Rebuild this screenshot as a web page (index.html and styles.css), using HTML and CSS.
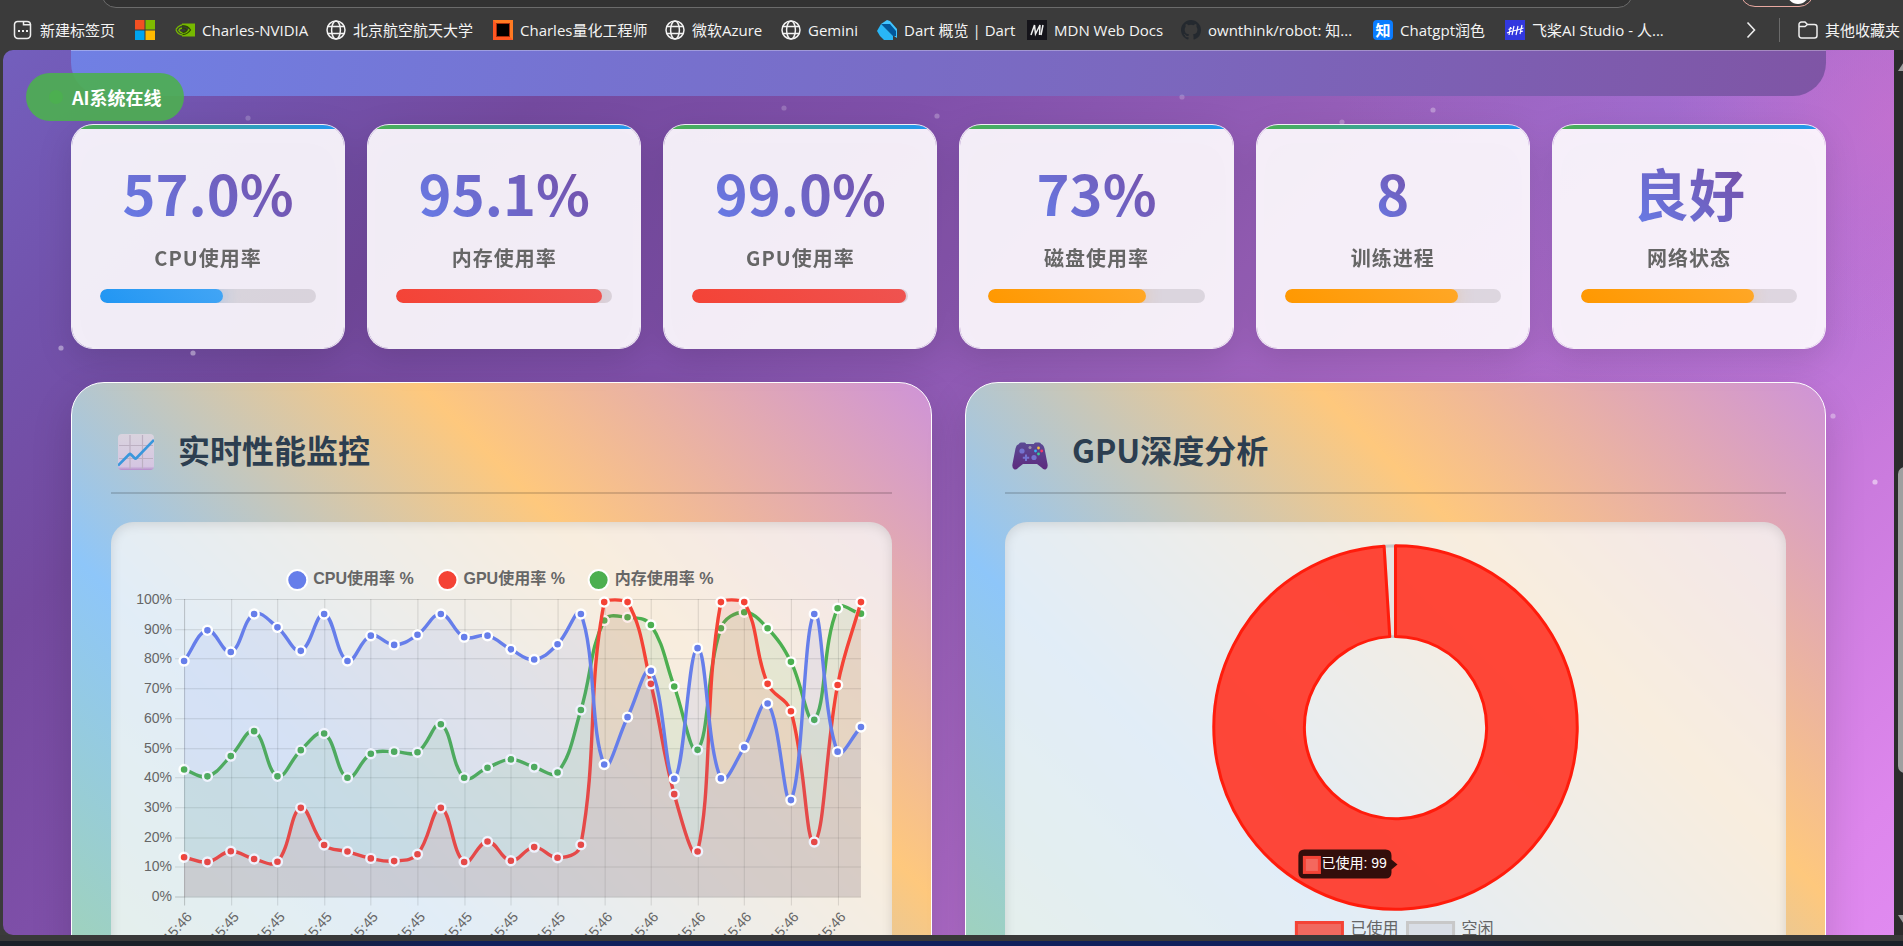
FILE: index.html
```html
<!DOCTYPE html>
<html lang="zh-CN">
<head>
<meta charset="utf-8">
<title>AI系统监控</title>
<link rel="stylesheet" href="styles.css">
</head>
<body>
<svg class="defs" width="0" height="0" aria-hidden="true">
  <symbol id="globe" viewBox="0 0 20 20"><g fill="none" stroke="#f2f2f2" stroke-width="1.5"><circle cx="10" cy="10" r="9"/><ellipse cx="10" cy="10" rx="4.4" ry="9"/><path d="M2 6.6h16M2 13.4h16"/></g></symbol>
</svg>

<header class="browser">
  <div class="toolbar">
    <div class="address"></div>
    <div class="profile"><span class="avatar"></span></div>
  </div>
  <nav class="bookmarks">
    <div class="marks">
      <a class="mark" href="#"><svg viewBox="0 0 20 20"><g fill="none" stroke="#eee" stroke-width="1.5"><path d="M4.500 1.500h6v3.200h7V15a3.500 3.500 0 0 1-3.500 3.500H5A3.500 3.500 0 0 1 1.500 15V4.500a3 3 0 0 1 3-3zM10.500 1.500H14a3.500 3.500 0 0 1 3.500 3.400"/></g><path d="M5 10h2v2H5zM9 10h2v2H9zM13 10h2v2h-2z" fill="#eee"/></svg>新建标签页</a>
      <a class="mark" href="#" aria-label="Microsoft"><svg viewBox="0 0 20 20"><path fill="#f25022" d="M0 0h9.500v9.500H0z"/><path fill="#7fba00" d="M10.500 0H20v9.500h-9.500z"/><path fill="#00a4ef" d="M0 10.500h9.500V20H0z"/><path fill="#ffb900" d="M10.500 10.500H20V20h-9.500z"/></svg></a>
      <a class="mark" href="#"><svg viewBox="0 0 20 20"><path fill="#76b900" d="M7 3.500h13v13H7z"/><path d="M0 10c3-5 9-6.500 14-2-2 5-9 7-14 2z" fill="#3b3b3b"/><g fill="none" stroke-width="1.300"><path stroke="#76b900" d="M.800 9.600C4 4.400 8 5 7.500 5M1 10c1.500 3.500 4 5 7 5M7 8c-2 .4-3 1.600-3.200 2.400C5 12.500 7 13 8 12.800"/><path stroke="#2d4a00" d="M7 6c4-.5 7 1.500 8.500 4-2 3-5 4.500-8 4.500M7 8.300c2.500-.4 4 .7 4.800 2-1 1.600-2.500 2.300-4.300 2"/></g></svg>Charles-NVIDIA</a>
      <a class="mark" href="#"><svg><use href="#globe"/></svg>北京航空航天大学</a>
      <a class="mark" href="#"><svg viewBox="0 0 20 20"><path fill="#ff5722" d="M0 0h20v20H0z"/><path fill="#ff7a22" d="M0 0h20v20L17 17V3H3z"/><path fill="#a62d0c" d="M3 3h14v14H3z"/><path fill="#000" d="M4 4h12v12H4z"/></svg>Charles量化工程师</a>
      <a class="mark" href="#"><svg><use href="#globe"/></svg>微软Azure</a>
      <a class="mark" href="#"><svg><use href="#globe"/></svg>Gemini</a>
      <a class="mark" href="#"><svg viewBox="0 0 20 20"><path fill="#40c4ff" d="M4 4l6-4 3 1 7 8v9l-3-2z"/><path fill="#01579b" d="M4 4h9l6 7v5h-3z"/><path fill="#29b6f6" d="M4 4L0 11l3 5 4 4h9v-4z"/></svg>Dart 概览 | Dart</a>
      <a class="mark" href="#"><svg viewBox="0 0 20 20"><path fill="#15141a" d="M0 0h20v20H0z"/><path d="M4 15L7.500 5l1 9L13 5l-.5 10M14 15l2-10" fill="none" stroke="#eee" stroke-width="1.500"/></svg>MDN Web Docs</a>
      <a class="mark" href="#"><svg viewBox="0 0 16 16"><path fill="#24292f" d="M8 0C3.580 0 0 3.580 0 8c0 3.540 2.290 6.530 5.470 7.590.4.070.55-.17.55-.38v-1.490c-2.010.37-2.530-.49-2.690-.94-.09-.23-.48-.94-.82-1.130-.28-.15-.68-.52-.01-.53.63-.01 1.080.58 1.230.82.72 1.210 1.870.87 2.330.66.070-.52.280-.87.510-1.070-1.780-.2-3.640-.89-3.640-3.950 0-.87.310-1.590.82-2.150-.08-.2-.36-1.020.08-2.120 0 0 .67-.21 2.200.82a7.400 7.400 0 0 1 4 0c1.530-1.040 2.200-.82 2.200-.82.44 1.100.16 1.920.08 2.120.51.56.82 1.270.82 2.150 0 3.070-1.870 3.750-3.650 3.950.29.250.54.730.54 1.480v2.200c0 .21.150.46.550.38A8.010 8.010 0 0 0 16 8c0-4.420-3.580-8-8-8z"/></svg>ownthink/robot: 知...</a>
      <a class="mark" href="#"><span class="zhihu">知</span>Chatgpt润色</a>
      <a class="mark" href="#"><svg viewBox="0 0 20 20"><path fill="#3238df" d="M0 0h20v20H0z"/><path d="M2 13l5-2M3.500 9.500L7 8M5.500 7L4 15M9 6l-2 9M8 11l4-1M13 6l-2 9M12.500 10l6-2M17 5l-2 9M15 12l3-1" fill="none" stroke="#fff" stroke-width="1.200"/></svg>飞桨AI Studio - 人...</a>
    </div>
    <button class="more" aria-label="更多"><svg viewBox="0 0 10 18"><path d="M1.500 1.500L8.500 9l-7 7.500" fill="none" stroke="#eee" stroke-width="1.600"/></svg></button>
    <a class="mark others" href="#"><svg viewBox="0 0 20 20"><path d="M1 4.500A2.500 2.500 0 0 1 3.500 2H7l2.500 2.500h7A2.500 2.500 0 0 1 19 7v8.500a2.500 2.500 0 0 1-2.500 2.500h-13A2.500 2.500 0 0 1 1 15.500zM1 6.500h6l2.500-2" fill="none" stroke="#eee" stroke-width="1.500"/></svg>其他收藏夹</a>
  </nav>
</header>

<div class="window">
  <main class="page">
    <div class="status"><span class="dot"></span>AI系统在线</div>
    <div class="hero"></div>
    <section class="stats">
      <article class="stat"><div class="value">57.0%</div><div class="label">CPU使用率</div><div class="track"><div class="fill blue" style="width:57%"></div></div></article>
      <article class="stat"><div class="value">95.1%</div><div class="label">内存使用率</div><div class="track"><div class="fill red" style="width:95%"></div></div></article>
      <article class="stat"><div class="value">99.0%</div><div class="label">GPU使用率</div><div class="track"><div class="fill red" style="width:99%"></div></div></article>
      <article class="stat"><div class="value">73%</div><div class="label">磁盘使用率</div><div class="track"><div class="fill orange" style="width:73%"></div></div></article>
      <article class="stat"><div class="value">8</div><div class="label">训练进程</div><div class="track"><div class="fill orange" style="width:80%"></div></div></article>
      <article class="stat"><div class="value">良好</div><div class="label">网络状态</div><div class="track"><div class="fill orange" style="width:80%"></div></div></article>
    </section>
    <section class="panels">
      <article class="panel">
        <h2 class="title">
          <svg class="emoji" viewBox="0 0 36 36"><defs><linearGradient id="paper" x1="0" y1="0" x2="0" y2="1"><stop offset="0" stop-color="#d9d3de"/><stop offset=".9" stop-color="#d5c6e2"/><stop offset="1" stop-color="#b58ccb"/></linearGradient></defs><rect width="36" height="36" rx="4" fill="url(#paper)"/><path d="M12 1v34M24.500 1v34M1 11.500h34M1 24.500h34" stroke="#bcb0c2" stroke-width="1.200"/><path d="M0 31.500L11 20.500q1-1 2 0l3.500 3.500q1 1 2 0L36 6" fill="none" stroke="#3a97dc" stroke-width="2.600"/></svg>
          实时性能监控
        </h2>
        <div class="chart"><svg id="performance" viewBox="0 0 780 520" role="img" aria-label="实时性能监控"></svg></div>
      </article>
      <article class="panel">
        <h2 class="title">
          <svg class="emoji" viewBox="0 0 36 36"><defs><linearGradient id="pad" x1="0" y1="0" x2="0" y2="1"><stop offset="0" stop-color="#5b4a94"/><stop offset="1" stop-color="#5d2a7e"/></linearGradient></defs><path d="M7 10q0-1.500 2-1.500h3.500q1.500 0 1.500 1.500h8q0-1.500 1.500-1.500H27q2 0 2 1.500 2.500.5 3.500 4.500L35.500 30q.8 4.500-2 5.500-2 .5-4-2L25 30H11l-4.500 3.500q-2 2.500-4 2Q-.3 34.500.5 30l3-15.500Q4.500 10.500 7 10z" fill="url(#pad)"/><g fill="#7473cf"><circle cx="10" cy="17" r="2.600"/><circle cx="22" cy="23.500" r="2.600"/><path d="M13 20.500h2v2.200h2.200v2H15v2.300h-2v-2.300h-2.200v-2H13z"/></g><circle cx="18" cy="13.500" r="1.500" fill="#9a94ad"/><circle cx="26.500" cy="14" r="1.400" fill="#f8c03e"/><circle cx="29.700" cy="17" r="1.400" fill="#f0386b"/><circle cx="23.500" cy="17" r="1.400" fill="#35b4f2"/><circle cx="26.500" cy="20" r="1.400" fill="#37d196"/></svg>
          GPU深度分析
        </h2>
        <div class="chart"><svg id="gpu" viewBox="0 0 780 520" role="img" aria-label="GPU深度分析">
          <g class="donut">
            <path class="free" d="M378.600 24.160A181.500 181.500 0 0 1 390 23.800L390 114.300A91 91 0 0 0 384.290 114.480Z"/>
            <path class="used" d="M390 23.800A181.500 181.500 0 1 1 378.600 24.160L384.290 114.480A91 91 0 1 0 390 114.300Z"/>
          </g>
          <g class="tip">
            <path d="M299 327h81q6 0 6 6v4l6 5-6 5v3q0 6-6 6h-81q-6 0-6-6v-17q0-6 6-6z"/>
            <rect class="tipmark" x="299" y="335" width="15" height="15"/>
            <text x="316" y="346">已使用: 99</text>
          </g>
          <g class="key">
            <rect class="keyused" x="291" y="400" width="46" height="18"/><text x="345" y="411">已使用</text>
            <rect class="keyfree" x="402" y="400" width="46" height="18"/><text x="456" y="411">空闲</text>
          </g>
        </svg></div>
      </article>
    </section>
    <svg class="particles" id="particles" aria-hidden="true"></svg>
  </main>
  <div class="scroll"><svg class="up" viewBox="0 0 14 12"><path d="M0 12L7 1l7 11z"/></svg><div class="thumb"></div><svg class="down" viewBox="0 0 14 12"><path d="M0 0h14L7 11z"/></svg></div>
</div>
<footer class="desktop"></footer>
<script src="chart.js"></script>
</body>
</html>
```
FILE: styles.css
```css
* { box-sizing: border-box; }
body {
  margin: 0; height: 100vh; display: flex; flex-direction: column; overflow: hidden;
  background: #3b3b3b; font-family: "Noto Sans CJK SC", sans-serif;
}
.defs { position: absolute; }

.browser { height: 50px; flex: none; display: flex; flex-direction: column; }
.toolbar { height: 8px; display: flex; overflow: hidden; align-items: flex-end; padding-left: 101px; padding-right: 89px; justify-content: space-between; }
.address { width: 1532px; height: 30px; flex: none; background: #323232; border: 1px solid #6b6b6b; border-radius: 15px; }
.profile { width: 74px; height: 30px; margin-bottom: 1px; border: 1px solid #e8a8a0; border-radius: 15px; display: flex; justify-content: flex-end; align-items: flex-end; padding: 0 4px 2px; }
.avatar { width: 22px; height: 22px; border-radius: 50%; background: #fff; }
.bookmarks { height: 42px; display: flex; align-items: center; padding: 2px 0 0 13px; overflow: hidden; }
.marks { flex: 1; display: grid; grid-template-columns: 122px 40px 151px 167px 172px 116px 96px 150px 154px 192px 132px 1fr; }
.mark { display: flex; align-items: center; gap: 7px; color: #f4f4f4; text-decoration: none; white-space: nowrap; font: 15px/20px "Open Sans", "Noto Sans CJK SC", sans-serif; }
.mark svg { width: 20px; height: 20px; flex: none; }
.zhihu { width: 20px; height: 20px; border-radius: 4px; background: #0a7cff; color: #fff; font: bold 15px/20px "Noto Sans CJK SC", sans-serif; text-align: center; }
.more { width: 10px; height: 20px; margin-right: 23px; padding: 0; border: 0; background: none; }
.more svg { width: 10px; height: 18px; display: block; }
.others { border-left: 1px solid #6a6a6a; padding-left: 18px; height: 24px; flex: none; width: 124px; }

.window { flex: 1; min-height: 0; display: flex; padding-left: 3px; }
.page {
  flex: 1; min-width: 0; position: relative; overflow: hidden; border-radius: 10px 0 0 10px;
  padding: 0 68px; display: flex; flex-direction: column;
  background:
    radial-gradient(circle at 100% 8%, rgba(205, 112, 205, .6), transparent 11%),
    radial-gradient(circle at 91% 5%, rgba(140, 119, 230, .3), transparent 20%),
    linear-gradient(135deg, #735fbd 0%, #7253ad 10%, #744a9f 21%, #8050aa 35%, #955eb8 50%, #aa68c6 63%, #c678da 80%, #dd86ec 95%, #e08af0 100%);
}
.status {
  position: absolute; left: 23px; top: 23px; z-index: 3; height: 48px; padding: 0 23px; border-radius: 24px;
  display: flex; align-items: center; gap: 9px; background: rgba(76, 175, 80, .9);
  color: #fff; font-weight: bold; font-size: 18px;
}
.dot { width: 14px; height: 14px; border-radius: 50%; background: #4caf50; }
.hero { height: 46px; flex: none; border-radius: 0 0 33px 33px; border-top: 1px solid rgba(255, 255, 255, .3); background: linear-gradient(100deg, #7080e4 0%, #7672d0 30%, #7b68bf 60%, #7f55a5 100%); }

.stats { flex: none; margin-top: 28px; display: grid; grid-template-columns: repeat(6, 1fr); gap: 22px; filter: drop-shadow(0 10px 16px rgba(0, 0, 0, .13)); }
.stat {
  position: relative; overflow: hidden; height: 225px; padding: 27px 28px; border: 1px solid rgba(255, 255, 255, .9); border-radius: 22px;
  background: rgba(255, 253, 255, .91); background-clip: padding-box; text-align: center;
}
.stat::before { content: ""; position: absolute; left: 0; right: 0; top: 0; height: 4px; background: linear-gradient(90deg, #4caf50, #2196f3); }
.value { width: fit-content; margin: 0 auto; font-size: 56px; font-weight: bold; line-height: 80px; background: linear-gradient(45deg, #667eea, #764ba2); -webkit-background-clip: text; background-clip: text; color: transparent; }
.label { margin-top: 11px; font-size: 20px; font-weight: bold; line-height: 30px; letter-spacing: 1px; color: #666; }
.track { margin-top: 16px; height: 14px; border-radius: 7px; overflow: hidden; background: rgba(0, 0, 0, .1); }
.fill { height: 100%; border-radius: 7px; }
.blue { background: linear-gradient(45deg, #2196f3, #42a5f5); box-shadow: 0 0 18px rgba(33, 150, 243, .4); }
.red { background: linear-gradient(45deg, #f44336, #ef5350); box-shadow: 0 0 18px rgba(244, 67, 54, .2); }
.orange { background: linear-gradient(45deg, #ff9800, #ffa726); box-shadow: 0 0 18px rgba(255, 152, 0, .3); }

.panels { flex: none; margin-top: 33px; display: grid; grid-template-columns: 1fr 1fr; gap: 33px; }
.panel {
  padding: 39px; border: 1px solid #fff; border-radius: 33px;
  background: linear-gradient(45deg, #a5d6a7, #8ec6f9 34%, #fec87d 67%, #ce93d8) border-box;
  box-shadow: 0 16px 40px rgba(0, 0, 0, .15);
}
.title { margin: 0 0 28px; height: 72px; padding: 0 0 16px 7px; border-bottom: 2px solid rgba(0, 0, 0, .15); display: flex; align-items: center; gap: 24px; color: #2c3e50; font-size: 32px; line-height: 48px; }
.emoji { width: 36px; height: 36px; margin-top: 6px; }
.chart { border-radius: 22px; overflow: hidden; background: rgba(246, 246, 246, .8); box-shadow: inset 0 2px 12px rgba(0, 0, 0, .12); }
.chart svg { display: block; width: 100%; }

.grid { stroke: rgba(0, 0, 0, .12); stroke-width: 1; }
.axis { stroke: rgba(0, 0, 0, .2); stroke-width: 1; }
.tick { font: 14px "Liberation Sans", sans-serif; fill: #666; text-anchor: end; }
.legend { font: bold 16px "Liberation Sans", "Noto Sans CJK SC", sans-serif; fill: #666; }
.free { fill: #e6e3df; stroke: #c8c8c8; stroke-width: 3; }
.used { fill: rgba(255, 55, 40, .92); stroke: #ff1c0c; stroke-width: 3; stroke-linejoin: round; }
.tip path { fill: rgba(0, 0, 0, .8); }
.tip text { fill: #fff; font: 14px "Liberation Sans", "Noto Sans CJK SC", sans-serif; }
.tipmark { fill: #f4685e; stroke: #f44336; stroke-width: 3; }
.key text { fill: #666; font: 16px "Liberation Sans", "Noto Sans CJK SC", sans-serif; }
.keyused { fill: #f0695f; stroke: #f44336; stroke-width: 3; }
.keyfree { fill: #d9dee6; stroke: #c8c8c8; stroke-width: 3; }

.particles { position: absolute; left: 0; top: 0; width: 100%; height: 100%; pointer-events: none; }
.scroll { width: 9px; position: relative; overflow: hidden; background: #2c2c2c; }
.scroll svg { position: absolute; left: 4px; width: 14px; height: 12px; fill: #9f9f9f; }
.up { top: 9px; }
.down { bottom: 8px; }
.thumb { position: absolute; left: 4px; top: 417px; width: 14px; height: 306px; border-radius: 7px; background: #9f9f9f; }
.desktop { flex: none; height: 11px; border-top: 6px solid #393939; background: linear-gradient(90deg, #1a2028 0%, #1a2028 10%, #10205c 25%, #10205c 70%, #1a2028 82%, #1a2028 100%); }
```
FILE: chart.js
```js
const NS = "http://www.w3.org/2000/svg";
const add = (parent, name, attrs, text) => {
  const el = document.createElementNS(NS, name);
  for (const key in attrs) el.setAttribute(key, attrs[key]);
  if (text) el.textContent = text;
  parent.appendChild(el);
  return el;
};

const area = { left: 73, right: 749, top: 77, bottom: 374 };
const series = [
  { name: "CPU使用率 %", rgb: "102,126,234", dot: 186, data: [79.2,89.5,82.2,95,90.5,82.6,95,79.2,87.7,84.6,88,95,87.2,87.7,83.1,79.7,84.8,95,44.4,60.3,75.9,39.6,83.5,39.7,50.2,64.9,32.4,95,48.7,57] },
  { name: "GPU使用率 %", rgb: "244,67,54", dot: 336, data: [13.2,11.6,15.2,12.6,11.7,29.8,17.3,15.1,12.8,11.9,14.2,29.8,11.6,18.5,12,16.6,13,17.4,99,99,71.5,34.4,15.1,99,99,71.5,62.3,18.3,71.1,99] },
  { name: "内存使用率 %", rgb: "76,175,80", dot: 487, data: [42.7,40.4,47.2,55.6,40.4,49.2,54.8,39.9,48,48.7,48.5,57.9,39.9,43.3,46.1,43.5,41.7,62.7,92.8,93.9,91.3,70.6,49.3,90.2,95.6,90.2,78.9,59.4,96.9,95.1] }
];
const svg = document.getElementById("performance");
const step = (area.right - area.left) / 29;
const px = i => area.left + i * step;
const py = v => area.bottom - v * (area.bottom - area.top) / 100;

for (let v = 0; v <= 100; v += 10) {
  const y = Math.round(py(v)) + 0.5;
  add(svg, "line", { x1: area.left - 9, x2: area.right, y1: y, y2: y, class: v ? "grid" : "axis" });
  add(svg, "text", { x: 61, y: y + 4, class: "tick" }, v + "%");
}
for (let i = 0; i < 30; i += 2) {
  const x = Math.round(px(i)) + 0.5;
  add(svg, "line", { x1: x, x2: x, y1: area.top, y2: area.bottom + 9, class: i ? "grid" : "axis" });
  const label = i === 0 || i > 17 ? "15:46" : "15:45";
  add(svg, "text", { x: x + 8, y: area.bottom + 21, class: "tick", transform: `rotate(-48 ${x + 8} ${area.bottom + 21})` }, label);
}

const clamp = y => Math.min(area.bottom, Math.max(area.top, y));
function curve(points) {
  const ctrl = points.map((p, i) => {
    const a = points[Math.max(i - 1, 0)], b = points[Math.min(i + 1, points.length - 1)];
    const da = Math.hypot(p.x - a.x, p.y - a.y), db = Math.hypot(b.x - p.x, b.y - p.y);
    const fa = 0.4 * da / (da + db), fb = 0.4 * db / (da + db);
    return {
      inX: p.x - fa * (b.x - a.x), inY: clamp(p.y - fa * (b.y - a.y)),
      outX: p.x + fb * (b.x - a.x), outY: clamp(p.y + fb * (b.y - a.y))
    };
  });
  let d = `M${points[0].x} ${points[0].y}`;
  for (let i = 1; i < points.length; i++) {
    const o = ctrl[i - 1], c = ctrl[i];
    d += `C${o.outX} ${o.outY} ${c.inX} ${c.inY} ${points[i].x} ${points[i].y}`;
  }
  return d;
}

[...series].reverse().forEach(s => {
  const points = s.data.map((v, i) => ({ x: px(i), y: py(v) }));
  const d = curve(points);
  add(svg, "path", { d: `${d}V${area.bottom}H${area.left}Z`, fill: `rgba(${s.rgb},0.1)` });
  add(svg, "path", { d, fill: "none", stroke: `rgb(${s.rgb})`, "stroke-width": 3.4 });
  points.forEach(p => add(svg, "circle", { cx: p.x, cy: p.y, r: 4.5, fill: `rgb(${s.rgb})`, stroke: "#fff", "stroke-width": 2.4 }));
});
series.forEach(s => {
  add(svg, "circle", { cx: s.dot, cy: 58, r: 10, fill: `rgb(${s.rgb})`, stroke: "#fff", "stroke-width": 2 });
  add(svg, "text", { x: s.dot + 16, y: 62, class: "legend" }, s.name);
});

const layer = document.getElementById("particles");
[[245,68,.2],[781,58,.2],[934,66,.25],[1179,47,.2],[1430,60,.3],[1339,72,.25],[58,298,.4],[190,303,.4],[1830,366,.35],[1872,432,.5]]
  .forEach(([cx, cy, o]) => add(layer, "circle", { cx, cy, r: 2.6, fill: "#fff", opacity: o }));
```
